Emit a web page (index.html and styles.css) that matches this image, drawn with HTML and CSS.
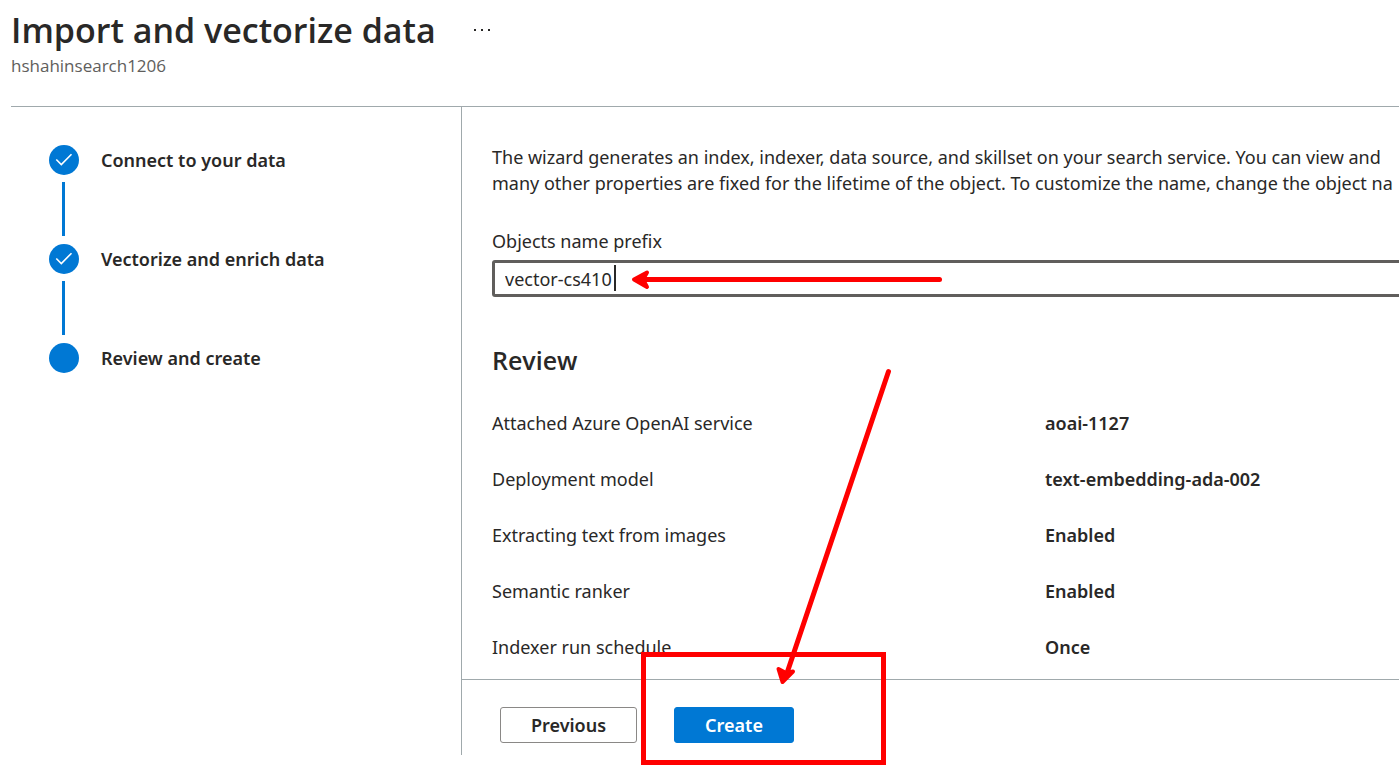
FILE: index.html
```html
<!DOCTYPE html>
<html lang="en">
<head>
<meta charset="utf-8">
<meta name="viewport" content="width=device-width, initial-scale=1">
<title>Import and vectorize data</title>
<link rel="stylesheet" href="styles.css">
</head>
<body>
<div class="page">
  <header class="header">
    <div class="title-row">
      <h1 class="title">Import and vectorize data</h1>
      <button class="more" type="button" aria-label="More options">
        <svg width="18" height="4" viewBox="0 0 18 4" fill="#292827"><rect x="1" y="1" width="2" height="2"/><rect x="8" y="1" width="2" height="2"/><rect x="15" y="1" width="2" height="2"/></svg>
      </button>
    </div>
    <p class="subtitle">hshahinsearch1206</p>
  </header>
  <div class="wizard">
    <nav class="sidebar" aria-label="Wizard steps">
      <ol class="steps">
        <li class="step">
          <span class="dot"><svg width="18" height="14" viewBox="0 0 18 14" fill="none" stroke="#fff" stroke-width="1.6"><path d="M1.300 6.500L6.300 11.500L16.500 1.200"/></svg></span>
          <span class="step-name">Connect to your data</span>
        </li>
        <li class="step">
          <span class="dot"><svg width="18" height="14" viewBox="0 0 18 14" fill="none" stroke="#fff" stroke-width="1.6"><path d="M1.300 6.500L6.300 11.500L16.500 1.200"/></svg></span>
          <span class="step-name">Vectorize and enrich data</span>
        </li>
        <li class="step">
          <span class="dot"></span>
          <span class="step-name">Review and create</span>
        </li>
      </ol>
    </nav>
    <div class="panel">
      <main class="content">
        <p class="intro">The wizard generates an index, indexer, data source, and skillset on your search service. You can view and<br>many other properties are fixed for the lifetime of the object. To customize the name, change the object na</p>
        <label class="field-label" for="prefix">Objects name prefix</label>
        <div class="field">
          <input class="field-input" id="prefix" type="text" value="vector-cs410">
          <span class="caret"></span>
        </div>
        <h2 class="section-title">Review</h2>
        <dl class="review">
          <dt>Attached Azure OpenAI service</dt><dd>aoai-1127</dd>
          <dt>Deployment model</dt><dd>text-embedding-ada-002</dd>
          <dt>Extracting text from images</dt><dd>Enabled</dd>
          <dt>Semantic ranker</dt><dd>Enabled</dd>
          <dt>Indexer run schedule</dt><dd>Once</dd>
        </dl>
      </main>
      <footer class="footer">
        <button class="btn btn-previous" type="button">Previous</button>
        <button class="btn btn-create" type="button">Create</button>
      </footer>
    </div>
  </div>
  <svg class="marks" width="1000" height="766" viewBox="0 0 1000 766" fill="none" stroke="#f00" stroke-width="5" stroke-linecap="round" stroke-linejoin="round" aria-hidden="true">
    <path d="M939.500 279.500H638"/>
    <path fill="#f00" stroke-width="4" d="M634 279.500L647 272.500L643 279.500L647 287Z"/>
    <path d="M888.500 371.500L786 676"/>
    <path fill="#f00" stroke-width="4" d="M782.500 682L778.500 669L786 673L793 671.500Z"/>
    <rect x="643.500" y="654.500" width="240" height="108" stroke-linejoin="miter"/>
  </svg>
</div>
</body>
</html>
```
FILE: styles.css
```css
* {
  box-sizing: border-box;
}

body {
  margin: 0;
  background: #fff;
  color: #292827;
  font-family: "Noto Sans", "Open Sans", sans-serif;
  font-size: 18px;
  line-height: 26px;
}

h1, h2, p, ol, dl, dd {
  margin: 0;
  padding: 0;
}

.page {
  position: relative;
  display: flex;
  flex-direction: column;
  min-height: 100vh;
  padding: 6px 0 11px 11px;
  overflow: hidden;
}

.header {
  padding-bottom: 28px;
  font-family: "Open Sans", "Noto Sans", sans-serif;
}

.title-row {
  display: flex;
  align-items: center;
  gap: 37px;
}

.title {
  font-size: 34px;
  font-weight: 600;
  line-height: 48px;
}

.more {
  display: flex;
  padding: 0;
  border: 0;
  background: none;
}

.subtitle {
  color: #605e5c;
  font-size: 17px;
  line-height: 24px;
}

.wizard {
  display: flex;
  flex: 1;
  border-top: 1px solid #a0a9ac;
}

.sidebar {
  flex: none;
  width: 450px;
  padding: 38px;
}

.steps {
  display: grid;
  gap: 69px;
  list-style: none;
}

.step {
  position: relative;
  display: flex;
  align-items: center;
  gap: 22px;
  height: 30px;
  font-weight: 600;
}

.step:not(:last-child)::after {
  content: "";
  position: absolute;
  top: 37px;
  left: 13px;
  width: 3px;
  height: 54px;
  background: #0078d4;
}

.dot {
  display: flex;
  align-items: center;
  justify-content: center;
  width: 30px;
  height: 30px;
  border-radius: 50%;
  background: #0078d4;
}

.panel {
  display: flex;
  flex: 1;
  flex-direction: column;
  min-width: 0;
  border-left: 1px solid #a0a9ac;
}

.content {
  flex: 1;
  padding: 37px 0 0 30px;
  overflow: hidden;
}

.intro {
  margin-bottom: 32px;
  white-space: nowrap;
}

.field-label {
  display: block;
  margin-bottom: 6px;
}

.field {
  position: relative;
}

.field-input {
  display: block;
  width: calc(100% + 12px);
  height: 37px;
  padding: 0 10px;
  border: 3px solid #605e5c;
  border-radius: 3px;
  background: #fff;
  color: inherit;
  font: inherit;
  outline: 0;
}

.caret {
  position: absolute;
  top: 5px;
  left: 122px;
  width: 2px;
  height: 26px;
  background: #292827;
}

.section-title {
  margin: 46px 0 33px;
  font-family: "Open Sans", "Noto Sans", sans-serif;
  font-size: 25px;
  font-weight: 600;
  line-height: 34px;
}

.review {
  display: grid;
  grid-template-columns: 553px 1fr;
  row-gap: 30px;
}

.review dd {
  font-weight: 600;
}

.footer {
  display: flex;
  gap: 37px;
  height: 76px;
  padding: 27px 0 0 38px;
  border-top: 1px solid #a0a9ac;
}

.btn {
  height: 36px;
  padding: 0;
  border: 1px solid #8a8886;
  border-radius: 3px;
  background: #fff;
  color: inherit;
  font: inherit;
  font-weight: 600;
}

.btn-previous {
  width: 137px;
}

.btn-create {
  width: 120px;
  border-color: #0078d4;
  background: #0078d4;
  color: #fff;
}

.marks {
  position: absolute;
  top: 0;
  left: 0;
  pointer-events: none;
}
```
